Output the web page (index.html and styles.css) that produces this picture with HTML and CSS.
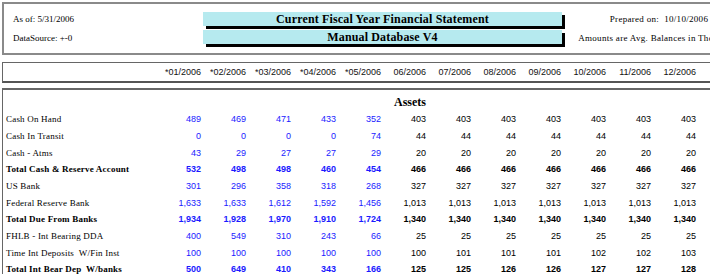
FILE: index.html
```html
<!DOCTYPE html>
<html>
<head>
<meta charset="utf-8">
<link rel="stylesheet" href="styles.css">
</head>
<body>
<div class="top">
  <div class="meta left">
    <div>As of: 5/31/2006</div>
    <div>DataSource: +-0</div>
  </div>
  <div class="titles">
    <div class="title">Current Fiscal Year Financial Statement</div>
    <div class="title">Manual Database V4</div>
  </div>
  <div class="meta right">
    <div>Prepared on:&nbsp; 10/10/2006</div>
    <div>Amounts are Avg. Balances in Thousands</div>
  </div>
</div>

<div class="colhead">
  <div class="row">
    <div class="lbl"></div>
    <div class="n">*01/2006</div><div class="n">*02/2006</div><div class="n">*03/2006</div><div class="n">*04/2006</div><div class="n">*05/2006</div>
    <div class="n">06/2006</div><div class="n">07/2006</div><div class="n">08/2006</div><div class="n">09/2006</div><div class="n">10/2006</div><div class="n">11/2006</div><div class="n">12/2006</div>
  </div>
</div>

<div class="data">
  <div class="row sect">
    <div class="lbl"></div><div></div><div></div><div></div><div></div><div></div>
    <div class="n sect-title">Assets</div>
  </div>
  <div class="row">
    <div class="lbl">Cash On Hand</div>
    <div class="n b">489</div><div class="n b">469</div><div class="n b">471</div><div class="n b">433</div><div class="n b">352</div>
    <div class="n">403</div><div class="n">403</div><div class="n">403</div><div class="n">403</div><div class="n">403</div><div class="n">403</div><div class="n">403</div>
  </div>
  <div class="row">
    <div class="lbl">Cash In Transit</div>
    <div class="n b">0</div><div class="n b">0</div><div class="n b">0</div><div class="n b">0</div><div class="n b">74</div>
    <div class="n">44</div><div class="n">44</div><div class="n">44</div><div class="n">44</div><div class="n">44</div><div class="n">44</div><div class="n">44</div>
  </div>
  <div class="row">
    <div class="lbl">Cash - Atms</div>
    <div class="n b">43</div><div class="n b">29</div><div class="n b">27</div><div class="n b">27</div><div class="n b">29</div>
    <div class="n">20</div><div class="n">20</div><div class="n">20</div><div class="n">20</div><div class="n">20</div><div class="n">20</div><div class="n">20</div>
  </div>
  <div class="row tot">
    <div class="lbl">Total Cash &amp; Reserve Account</div>
    <div class="n b">532</div><div class="n b">498</div><div class="n b">498</div><div class="n b">460</div><div class="n b">454</div>
    <div class="n">466</div><div class="n">466</div><div class="n">466</div><div class="n">466</div><div class="n">466</div><div class="n">466</div><div class="n">466</div>
  </div>
  <div class="row">
    <div class="lbl">US Bank</div>
    <div class="n b">301</div><div class="n b">296</div><div class="n b">358</div><div class="n b">318</div><div class="n b">268</div>
    <div class="n">327</div><div class="n">327</div><div class="n">327</div><div class="n">327</div><div class="n">327</div><div class="n">327</div><div class="n">327</div>
  </div>
  <div class="row">
    <div class="lbl">Federal Reserve Bank</div>
    <div class="n b">1,633</div><div class="n b">1,633</div><div class="n b">1,612</div><div class="n b">1,592</div><div class="n b">1,456</div>
    <div class="n">1,013</div><div class="n">1,013</div><div class="n">1,013</div><div class="n">1,013</div><div class="n">1,013</div><div class="n">1,013</div><div class="n">1,013</div>
  </div>
  <div class="row tot">
    <div class="lbl">Total Due From Banks</div>
    <div class="n b">1,934</div><div class="n b">1,928</div><div class="n b">1,970</div><div class="n b">1,910</div><div class="n b">1,724</div>
    <div class="n">1,340</div><div class="n">1,340</div><div class="n">1,340</div><div class="n">1,340</div><div class="n">1,340</div><div class="n">1,340</div><div class="n">1,340</div>
  </div>
  <div class="row">
    <div class="lbl">FHLB - Int Bearing DDA</div>
    <div class="n b">400</div><div class="n b">549</div><div class="n b">310</div><div class="n b">243</div><div class="n b">66</div>
    <div class="n">25</div><div class="n">25</div><div class="n">25</div><div class="n">25</div><div class="n">25</div><div class="n">25</div><div class="n">25</div>
  </div>
  <div class="row">
    <div class="lbl">Time Int Deposits&nbsp; W/Fin Inst</div>
    <div class="n b">100</div><div class="n b">100</div><div class="n b">100</div><div class="n b">100</div><div class="n b">100</div>
    <div class="n">100</div><div class="n">101</div><div class="n">101</div><div class="n">101</div><div class="n">102</div><div class="n">102</div><div class="n">103</div>
  </div>
  <div class="row tot">
    <div class="lbl">Total Int Bear Dep&nbsp; W/banks</div>
    <div class="n b">500</div><div class="n b">649</div><div class="n b">410</div><div class="n b">343</div><div class="n b">166</div>
    <div class="n">125</div><div class="n">125</div><div class="n">126</div><div class="n">126</div><div class="n">127</div><div class="n">127</div><div class="n">128</div>
  </div>
</div>
</body>
</html>
```
FILE: styles.css
```css
html, body {
  margin: 0;
  padding: 0;
  overflow: hidden;
  background: #fff;
}
body {
  width: 710px;
  height: 274px;
  color: #000;
  font-family: "Liberation Serif", "Times New Roman", serif;
}
.top {
  margin: 2px 0 0 2px;
  width: 900px;
  height: 49px;
  border: 2px solid #8a8a8a;
  border-right: 0;
  display: flex;
}
.meta {
  display: flex;
  flex-direction: column;
  gap: 7px;
  padding-top: 9px;
  font-size: 9px;
  line-height: 12px;
  white-space: nowrap;
}
.meta.left {
  width: 190px;
  padding-left: 9px;
}
.titles {
  width: 359px;
  padding-top: 8px;
  display: flex;
  flex-direction: column;
  gap: 4px;
}
.title {
  height: 14px;
  line-height: 14px;
  background: #b6eaef;
  box-shadow: 3px 3px 0 #000;
  text-align: center;
  font-weight: bold;
  font-size: 12px;
  letter-spacing: 0.15px;
}
.meta.right {
  margin-left: 16px;
  width: 162px;
  align-items: center;
  letter-spacing: 0.3px;
}
.colhead {
  margin: 7px 0 0 2px;
  width: 900px;
  height: 17px;
  border: 1px solid #666;
  border-bottom: 2px solid #555;
  border-right: 0;
  padding-top: 1px;
}
.data {
  margin: 5px 0 0 2px;
  width: 900px;
  height: 200px;
  border-top: 2px solid #666;
  border-left: 1px solid #666;
  padding-top: 4px;
}
.row {
  display: grid;
  grid-template-columns: 153px repeat(12, 45px);
  height: 16.67px;
  align-items: center;
  white-space: nowrap;
}
.lbl {
  padding-left: 3px;
  font-size: 9px;
  letter-spacing: 0.2px;
}
.n {
  text-align: right;
  font-family: "Liberation Sans", Arial, sans-serif;
  font-size: 9px;
}
.colhead .n {
  font-size: 9px;
  color: #111;
}
.b {
  color: #1a1aff;
}
.tot {
  font-weight: bold;
}
.sect {
  height: 17px;
}
.sect-title {
  font-family: "Liberation Serif", "Times New Roman", serif;
  font-weight: bold;
  font-size: 12px;
  direction: rtl;
  overflow: visible;
}
```
